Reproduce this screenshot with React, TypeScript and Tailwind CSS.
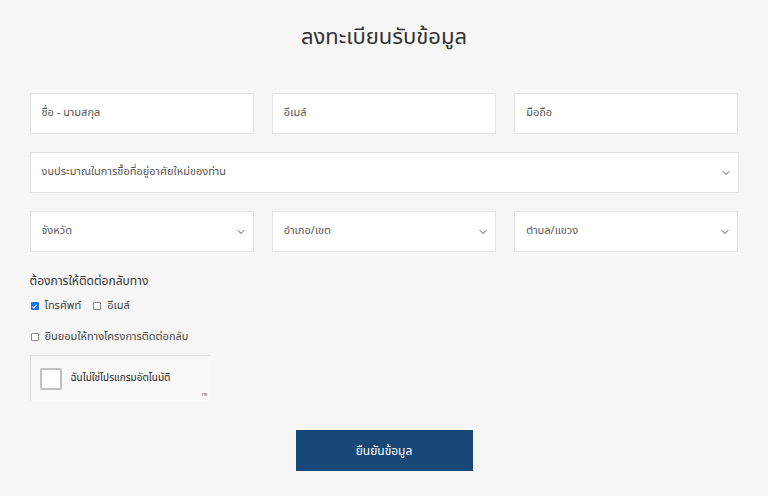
import { ChevronDown } from "lucide-react";

const font = { fontFamily: '"Noto Sans Thai", "Noto Sans", "Liberation Sans", sans-serif' };

function TextBox({ placeholder }: { placeholder: string }) {
  return (
    <div className="flex h-[41px] flex-1 items-center border border-[#e3e3e3] bg-white px-[11px] text-[11px] text-[#555]">
      {placeholder}
    </div>
  );
}

function SelectBox({ placeholder }: { placeholder: string }) {
  return (
    <div className="flex h-[41px] flex-1 items-center justify-between border border-[#e3e3e3] bg-white pl-[11px] pr-[6px] text-[11px] text-[#555]">
      <span>{placeholder}</span>
      <ChevronDown size={12} strokeWidth={2} className="text-[#555]" />
    </div>
  );
}

function Check({ checked, label }: { checked?: boolean; label: string }) {
  return (
    <label className="flex items-center gap-[6px] text-[11px] text-[#444]">
      {checked ? (
        <span className="flex h-[8px] w-[8px] items-center justify-center rounded-[1px] bg-[#1a73e8]">
          <svg viewBox="0 0 10 10" className="h-[7px] w-[7px]">
            <path d="M2 5.2l2 2 4-4.4" fill="none" stroke="white" strokeWidth="1.6" />
          </svg>
        </span>
      ) : (
        <span className="h-[8px] w-[8px] rounded-[1px] border border-[#888] bg-white" />
      )}
      {label}
    </label>
  );
}

export default function App() {
  return (
    <div className="h-[496px] w-full bg-[#f6f6f6]" style={font}>
      <div className="mx-auto w-[709px] pt-[21px]">
        <h1 className="text-center text-[22px] leading-[34px] text-[#333]">ลงทะเบียนรับข้อมูล</h1>

        <div className="mt-[38px] flex gap-[18px]">
          <TextBox placeholder="ชื่อ - นามสกุล" />
          <TextBox placeholder="อีเมล์" />
          <TextBox placeholder="มือถือ" />
        </div>

        <div className="mt-[18px] flex">
          <SelectBox placeholder="งบประมาณในการซื้อที่อยู่อาศัยใหม่ของท่าน" />
        </div>

        <div className="mt-[18px] flex gap-[18px]">
          <SelectBox placeholder="จังหวัด" />
          <SelectBox placeholder="อำเภอ/เขต" />
          <SelectBox placeholder="ตำบล/แขวง" />
        </div>

        <p className="mt-[20px] text-[12px] text-[#333]">ต้องการให้ติดต่อกลับทาง</p>

        <div className="mt-[8px] flex gap-[12px] pl-[1px]">
          <Check checked label="โทรศัพท์" />
          <Check label="อีเมล์" />
        </div>

        <div className="mt-[14px] pl-[1px]">
          <Check label="ยินยอมให้ทางโครงการติดต่อกลับ" />
        </div>

        <div className="relative mt-[10px] flex h-[46px] w-[180px] items-center border-l border-t border-[#dedede] bg-[#f9f9f9] pl-[9px]">
          <span className="h-[22px] w-[22px] rounded-[2px] border-2 border-[#c1c1c1] bg-white" />
          <span className="ml-[9px] text-[10px] text-[#222]">ฉันไม่ใช่โปรแกรมอัตโนมัติ</span>
          <span className="absolute bottom-[2px] right-[2px] text-[6px] text-[#777]">re</span>
        </div>

        <div className="mt-[29px] flex justify-center">
          <button className="h-[41px] w-[177px] bg-[#174878] text-[12px] text-white">ยืนยันข้อมูล</button>
        </div>
      </div>
    </div>
  );
}
